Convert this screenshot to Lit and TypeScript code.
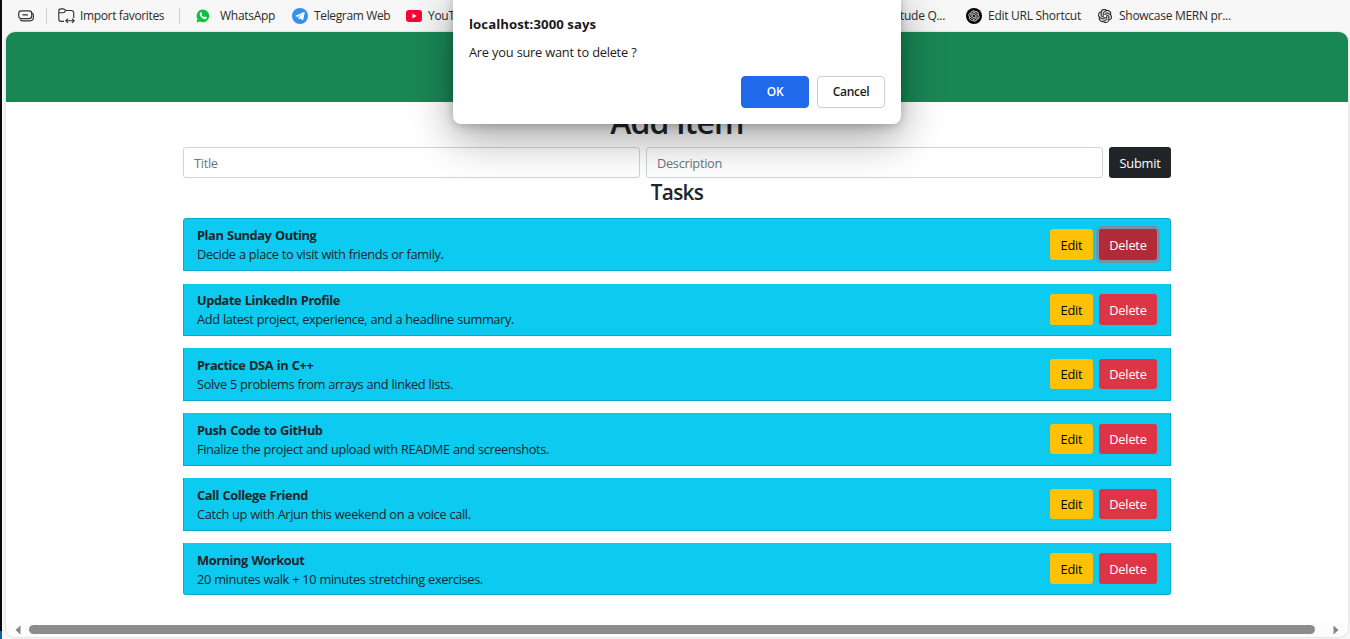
import { LitElement, html, css, svg } from "lit";
import { customElement } from "lit/decorators.js";

interface Task {
  title: string;
  text: string;
}

const TASKS: Task[] = [
  { title: "Plan Sunday Outing", text: "Decide a place to visit with friends or family." },
  { title: "Update LinkedIn Profile", text: "Add latest project, experience, and a headline summary." },
  { title: "Practice DSA in C++", text: "Solve 5 problems from arrays and linked lists." },
  { title: "Push Code to GitHub", text: "Finalize the project and upload with README and screenshots." },
  { title: "Call College Friend", text: "Catch up with Arjun this weekend on a voice call." },
  { title: "Morning Workout", text: "20 minutes walk + 10 minutes stretching exercises." },
];

const knot = (color: string) => svg`<path fill=${color} stroke=${color} stroke-width=".35" d="M22.2819 9.8211a5.9847 5.9847 0 0 0-.5157-4.9108 6.0462 6.0462 0 0 0-6.5098-2.9A6.0651 6.0651 0 0 0 4.9807 4.1818a5.9847 5.9847 0 0 0-3.9977 2.9 6.0462 6.0462 0 0 0 .7427 7.0966 5.98 5.98 0 0 0 .511 4.9107 6.051 6.051 0 0 0 6.5146 2.9001A5.9847 5.9847 0 0 0 13.2599 24a6.0557 6.0557 0 0 0 5.7718-4.2058 5.9894 5.9894 0 0 0 3.9977-2.9001 6.0557 6.0557 0 0 0-.7475-7.0729zm-9.022 12.6081a4.4755 4.4755 0 0 1-2.8764-1.0408l.1419-.0804 4.7783-2.7582a.7948.7948 0 0 0 .3927-.6813v-6.7369l2.02 1.1686a.071.071 0 0 1 .038.052v5.5826a4.504 4.504 0 0 1-4.4945 4.4944zm-9.6607-4.1254a4.4708 4.4708 0 0 1-.5346-3.0137l.142.0852 4.783 2.7582a.7712.7712 0 0 0 .7806 0l5.8428-3.3685v2.3324a.0804.0804 0 0 1-.0332.0615L9.74 19.9502a4.4992 4.4992 0 0 1-6.1408-1.6464zM2.3408 7.8956a4.485 4.485 0 0 1 2.3655-1.9728V11.6a.7664.7664 0 0 0 .3879.6765l5.8144 3.3543-2.0201 1.1685a.0757.0757 0 0 1-.071 0l-4.8303-2.7865A4.504 4.504 0 0 1 2.3408 7.872zm16.5963 3.8558L13.1038 8.364 15.1192 7.2a.0757.0757 0 0 1 .071 0l4.8303 2.7913a4.4944 4.4944 0 0 1-.6765 8.1042v-5.6772a.79.79 0 0 0-.407-.667zm2.0107-3.0231l-.142-.0852-4.7735-2.7818a.7759.7759 0 0 0-.7854 0L9.409 9.2297V6.8974a.0662.0662 0 0 1 .0284-.0615l4.8303-2.7866a4.4992 4.4992 0 0 1 6.6802 4.66zM8.3065 12.863l-2.02-1.1638a.0804.0804 0 0 1-.038-.0567V6.0742a4.4992 4.4992 0 0 1 7.3757-3.4537l-.142.0805L8.704 5.459a.7948.7948 0 0 0-.3927.6813zm1.0976-2.3654l2.602-1.4998 2.6069 1.4998v2.9994l-2.5974 1.4997-2.6067-1.4997Z"/>`;

@customElement("app-root")
export class AppRoot extends LitElement {
  static styles = css`
    :host {
      display: block;
      width: 1350px;
      height: 639px;
      overflow: hidden;
      position: relative;
      background: #f7f7f7;
      font-family: "Open Sans", "Noto Sans", sans-serif;
      font-size: 12.8px;
      color: #212529;
    }
    * { box-sizing: border-box; }
    svg { display: block; flex: none; }
    .window { display: grid; grid-template-columns: 2px 1fr; height: 639px; }
    .edge { background: linear-gradient(#0b0b0f 0 631px, #0a63b4 631px); }
    .main { display: flex; flex-direction: column; min-width: 0; }
    .bar { height: 32px; display: flex; align-items: center; padding-left: 16px; white-space: nowrap; color: #2b2b2b; font-size: 12px; }
    .sep { width: 1px; height: 16px; background: #cfcfcf; }
    .first { margin-left: 12px; }
    .fav { display: flex; align-items: center; gap: 6px; flex: none; }
    .import { margin-left: 11px; width: 121px; gap: 5px; }
    .wa { margin-left: 15px; width: 97px; gap: 9px; }
    .tg { width: 114px; }
    .yt { width: 494px; }
    .tude { width: 66px; }
    .url { width: 132px; }
    .last { gap: 7px; }
    .fav span { letter-spacing: -0.28px; line-height: 16px; }
    .import span, .tg span { letter-spacing: -0.36px; }
    .page { height: 605px; width: 1342px; margin-left: 4px; border-radius: 9px; background: #fff; overflow: hidden; box-shadow: 0 0 2px #b5b5b5; display: flex; flex-direction: column; }
    .nav { height: 70px; background: #198754; flex: none; }
    .content { width: 988px; margin-left: 177px; flex: 1; display: flex; flex-direction: column; }
    h1 { margin: 0; height: 45px; line-height: 40px; font-size: 32px; font-weight: 600; text-align: center; letter-spacing: -0.9px; }
    .form { display: grid; grid-template: 31px / 457px 457px 62px; gap: 6px; }
    .input { border: 1px solid #ced4da; border-radius: 3px; padding-left: 10px; line-height: 30px; height: 31px; color: #6c757d; letter-spacing: -0.3px; }
    .btn { border-radius: 3px; text-align: center; height: 31px; line-height: 32px; letter-spacing: -0.2px; }
    .submit { background: #212529; color: #fff; line-height: 33px; }
    h2 { margin: 0; height: 40px; line-height: 29px; font-size: 20.8px; font-weight: 600; text-align: center; letter-spacing: -0.65px; }
    .list { display: flex; flex-direction: column; gap: 12px; }
    .task { height: 53px; background: #0dcaf0; border: 1px solid #0ba9ce; border-top: 0; display: flex; align-items: flex-start; padding: 11px 13px 0; gap: 6px; }
    .task .btn { height: 30px; line-height: 30px; }
    .task:first-child { margin-bottom: 1px; padding-top: 10px; border-top: 1px solid #0ba9ce; border-radius: 3px 3px 0 0; }
    .task:nth-child(2) { height: 52px; padding-top: 10px; }
    .task:last-child { height: 52px; padding-top: 10px; border-radius: 0 0 3px 3px; }
    .task:nth-child(-n + 2) .btn, .task:last-child .btn { height: 31px; line-height: 33px; }
    .words { flex: 1; line-height: 19px; white-space: nowrap; margin-top: -3px; }
    .task:last-child .words { margin-top: -2px; }
    .title { font-weight: 700; letter-spacing: -0.42px; word-spacing: 0.7px; }
    .text { letter-spacing: -0.36px; word-spacing: 0.25px; }
    .edit { width: 43px; background: #ffc107; color: #000; }
    .delete { width: 58px; background: #dc3545; color: #fff; }
    .active { background: #b02a37; box-shadow: 0 0 0 3px rgba(225, 83, 97, 0.5); }
    .scroll { height: 15px; background: #fcfcfc; display: flex; align-items: center; padding-left: 9px; }
    .thumb { width: 1286px; height: 9px; border-radius: 5px; background: #8b8b8b; margin: 0 18px 0 8px; flex: none; }
    .dialog { position: absolute; left: 453px; top: -8px; width: 448px; height: 132px; border-radius: 8px; background: #fff; box-shadow: 0 14px 44px rgba(0, 0, 0, 0.36), 0 2px 10px rgba(0, 0, 0, 0.2); padding: 22px 16px 16px; display: flex; flex-direction: column; color: #1b1b1b; }
    .says { font-size: 13.2px; font-weight: 700; line-height: 20px; letter-spacing: 0.06px; }
    .ask { line-height: 20px; margin-top: 8px; letter-spacing: -0.26px; word-spacing: 0.3px; }
    .actions { display: flex; gap: 8px; justify-content: flex-end; margin-top: 14px; }
    .action { width: 68px; height: 32px; line-height: 30px; border-radius: 4px; border: 1px solid #cecece; text-align: center; font-size: 12px; font-weight: 600; letter-spacing: -0.3px; }
    .ok { background: #2169eb; border-color: #2169eb; color: #fff; }
  `;

  render() {
    return html`
      <div class="window">
        <div class="edge"></div>
        <div class="main">
          <div class="bar">
            <svg width="16" height="12" viewBox="0 0 16 12" fill="none" stroke="#333" stroke-width="1.2">
              <rect x=".7" y=".9" width="13" height="7.8" rx="2.6"/><path d="M4.4 4.9h5.6M2 9.5c.6.9 1.3 1.3 2.6 1.3H12c2.2 0 3.4-1.4 3.4-3.2V5.4c0-1-.4-1.8-1.2-2.4"/>
            </svg>
            <div class="sep first"></div>
            <div class="fav import">
              <svg width="17" height="16" viewBox="0 0 17 16" fill="none" stroke="#333" stroke-width="1.15">
                <path d="M6 13.4H3A2.2 2.2 0 0 1 .8 11.2V3A2.2 2.2 0 0 1 3 .8h2.2c1.4 0 1.8 1.7 3 1.7h5.3a2.2 2.2 0 0 1 2.2 2.2v5.3M.8 4.7h4.4c1.5 0 1.7-2.2 3-2.2M8 12.7h8M10 10.6l-2.2 2.1L10 14.8M14 10.6l2.2 2.1L14 14.8"/>
              </svg>
              <span>Import favorites</span>
            </div>
            <div class="sep"></div>
            <div class="fav wa">
              <svg width="16" height="16" viewBox="0 0 16 16">
                <path fill="#0fc143" d="M8 1.6a6.3 6.3 0 1 1-3 11.9L1.6 14.4l.9-3.3A6.3 6.3 0 0 1 8 1.6z"/>
                <path fill="#fff" d="M5.4 4.5c.5-.4 1-.3 1.2.2l.5 1.2c.1.4-.6.9-.5 1.2.5 1 1.3 1.7 2.3 2.1.4.1.8-.8 1.2-.7l1.3.6c.5.3.3 1.1-.2 1.6-2.3 2-7.6-2.7-6.3-5.4z"/>
              </svg>
              <span>WhatsApp</span>
            </div>
            <div class="fav tg">
              <svg width="16" height="16" viewBox="0 0 16 16"><circle cx="8" cy="8" r="8" fill="#3390ec"/><path fill="#fff" d="M3 7.9l9-3.9c.5-.2.8.1.7.6l-1.4 7c-.1.6-.5.7-1 .4L8 10.3l-1.3 1.3-.4-2.2 3.7-3.5-4.6 3z"/></svg>
              <span>Telegram Web</span>
            </div>
            <div class="fav yt">
              <svg width="16" height="12" viewBox="0 0 16 12"><rect width="16" height="12" rx="3" fill="#f03"/><path fill="#fff" d="M6.4 3.5v5l4.2-2.5z"/></svg>
              <span>YouTube</span>
            </div>
            <div class="fav tude"><span>tude Q...</span></div>
            <div class="fav url">
              <svg width="16" height="16" viewBox="0 0 16 16"><circle cx="8" cy="8" r="8" fill="#000"/><g transform="translate(2.5 2.5) scale(.458)">${knot("#ddd")}</g></svg>
              <span>Edit URL Shortcut</span>
            </div>
            <div class="fav last">
              <svg width="14" height="14" viewBox="0 0 24 24">${knot("#222")}</svg>
              <span>Showcase MERN pr...</span>
            </div>
          </div>
          <div class="page">
            <div class="nav"></div>
            <div class="content">
              <h1>Add Item</h1>
              <div class="form">
                <div class="input">Title</div>
                <div class="input">Description</div>
                <div class="btn submit">Submit</div>
              </div>
              <h2>Tasks</h2>
              <div class="list">
                ${TASKS.map(
                  (t, i) => html`<div class="task">
                    <div class="words"><div class="title">${t.title}</div><div class="text">${t.text}</div></div>
                    <div class="btn edit">Edit</div>
                    <div class="btn delete ${i === 0 ? "active" : ""}">Delete</div>
                  </div>`
                )}
              </div>
            </div>
            <div class="scroll">
              <svg width="6" height="10" viewBox="0 0 6 10"><path fill="#858585" d="M5.5 .5v9L.5 5z"/></svg>
              <div class="thumb"></div>
              <svg width="6" height="10" viewBox="0 0 6 10"><path fill="#858585" d="M.5 .5v9l5-4.5z"/></svg>
            </div>
          </div>
        </div>
      </div>
      <div class="dialog">
        <div class="says">localhost:3000 says</div>
        <div class="ask">Are you sure want to delete ?</div>
        <div class="actions"><div class="action ok">OK</div><div class="action">Cancel</div></div>
      </div>
    `;
  }
}
